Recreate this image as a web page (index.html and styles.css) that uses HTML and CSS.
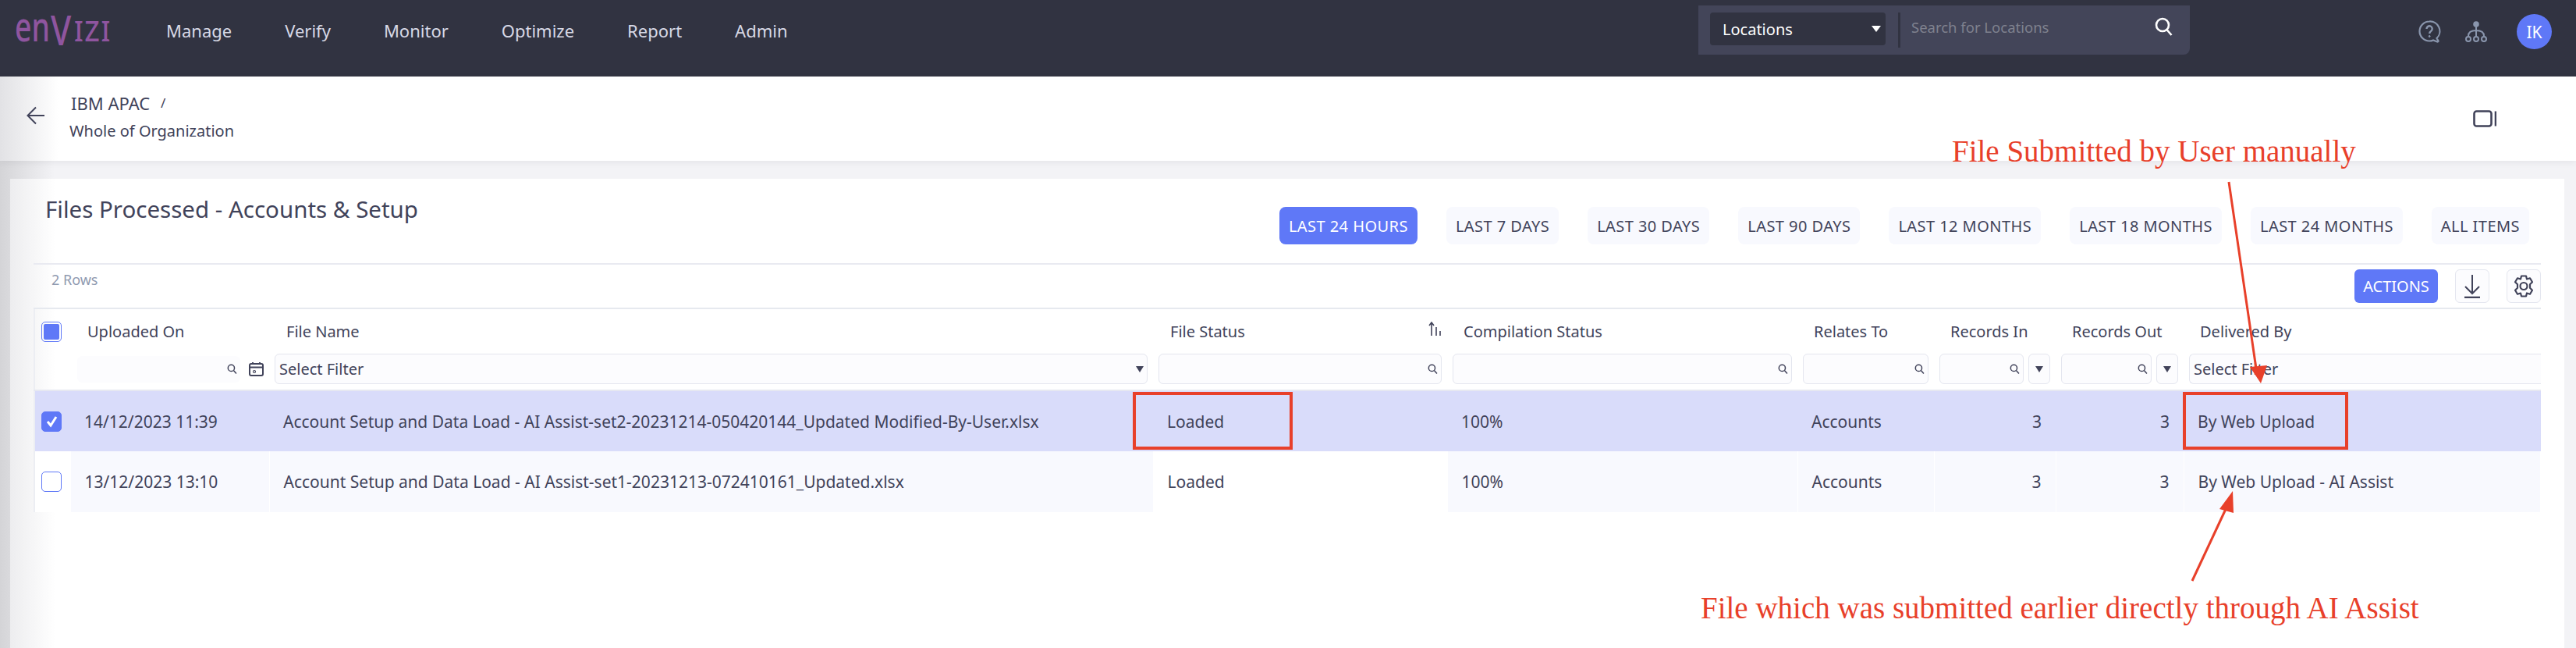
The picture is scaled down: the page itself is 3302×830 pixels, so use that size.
FILE: index.html
```html
<!DOCTYPE html>
<html lang="en">
<head>
    <meta charset="UTF-8">
    <title>Files Processed - Accounts &amp; Setup</title>
    <link rel="stylesheet" href="styles.css">
</head>
<body>
    <nav class="topbar">
        <div class="logo"><span class="logo-low">en</span><span class="logo-v">V</span><span class="logo-up">IZI</span></div>
        <ul class="menu">
            <li>Manage</li>
            <li>Verify</li>
            <li>Monitor</li>
            <li>Optimize</li>
            <li>Report</li>
            <li>Admin</li>
        </ul>
        <div class="search">
            <div class="search-select">
                <span>Locations</span>
                <span class="caret caret-white"></span>
            </div>
            <div class="search-input">
                <span>Search for Locations</span>
                <svg width="26" height="24" viewBox="0 0 26 24" fill="none" stroke="#fff" stroke-width="2.6">
                    <circle cx="11" cy="10" r="8"/>
                    <path d="M16.5 16l6 7"/>
                </svg>
            </div>
        </div>
        <div class="top-icons">
            <svg class="help" width="29" height="29" viewBox="0 0 29 29" fill="none" stroke="#8a96ad" stroke-width="2.2">
                <path d="M14 1.5a12.5 12.5 0 1 0 0 25c2 0 3.5-.4 5-1.1l5 2.1c1.5.3 2-.8 1-2l-1.5-2.5a12.5 12.5 0 0 0-9.500-21.500z"/>
                <path d="M10.5 11a3.6 3.6 0 1 1 5.5 3c-1.300.8-1.800 1.500-1.800 3" stroke-width="2.4"/>
                <circle cx="14.2" cy="20.5" r="1" fill="#8a96ad" stroke-width="1"/>
            </svg>
            <svg class="org" width="28" height="28" viewBox="0 0 28 28" fill="none" stroke="#8a96ad" stroke-width="2">
                <circle cx="14" cy="4" r="3.8" fill="#8a96ad" stroke="none"/>
                <path d="M14 7v15M4 19c0-5 4-7 10-7s10 2 10 7"/>
                <circle cx="4" cy="23" r="3" fill="#313341"/>
                <circle cx="14" cy="23" r="3" fill="#313341"/>
                <circle cx="24" cy="23" r="3" fill="#313341"/>
            </svg>
            <div class="avatar">IK</div>
        </div>
    </nav>

    <header class="subbar">
        <svg class="back" width="24" height="24" viewBox="0 0 24 24" fill="none" stroke="#41435a" stroke-width="2">
            <path d="M23 12H2M12 1.5L1.5 12 12 22.5"/>
        </svg>
        <div class="crumbs">
            <div class="crumb-top">IBM APAC <span class="crumb-sep">/</span></div>
            <div class="crumb-bottom">Whole of Organization</div>
        </div>
        <svg class="panel-icon" width="30" height="22" viewBox="0 0 30 22" fill="none" stroke="#41435a" stroke-width="2.6">
            <rect x="1.5" y="1.5" width="22" height="19" rx="3"/>
            <path d="M29 1.5v19"/>
        </svg>
    </header>

    <main class="page">
        <section class="card">
            <div class="card-head">
                <h1>Files Processed - Accounts &amp; Setup</h1>
                <div class="ranges">
                    <button class="range active">LAST 24 HOURS</button>
                    <button class="range">LAST 7 DAYS</button>
                    <button class="range">LAST 30 DAYS</button>
                    <button class="range">LAST 90 DAYS</button>
                    <button class="range">LAST 12 MONTHS</button>
                    <button class="range">LAST 18 MONTHS</button>
                    <button class="range">LAST 24 MONTHS</button>
                    <button class="range">ALL ITEMS</button>
                </div>
            </div>
            <div class="toolbar">
                <span class="row-count">2 Rows</span>
                <div class="tools">
                    <button class="actions">ACTIONS</button>
                    <button class="tool">
                        <svg width="22" height="30" viewBox="0 0 22 30" fill="none" stroke="#41435a" stroke-width="2">
                            <path d="M11 0v23M2 15l9 9 9-9"/>
                            <path d="M1 29h20" stroke-width="2.6"/>
                        </svg>
                    </button>
                    <button class="tool">
                        <svg width="28" height="29" viewBox="0 0 28 29" fill="none" stroke="#41435a" stroke-width="2.2">
                            <path d="M11 1.5h6l1 4 4-1.200 3 5-3 3v4.400l3 3-3 5-4-1.200-1 4h-6l-1-4-4 1.200-3-5 3-3v-4.400l-3-3 3-5 4 1.200z" stroke-linejoin="round"/>
                            <circle cx="14" cy="14.5" r="4.5"/>
                        </svg>
                    </button>
                </div>
            </div>

            <table class="grid">
                <colgroup>
                    <col class="c-check"><col class="c-date"><col class="c-name"><col class="c-status"><col class="c-comp">
                    <col class="c-rel"><col class="c-in"><col class="c-out"><col class="c-by">
                </colgroup>
                <thead>
                    <tr class="labels">
                        <th><span class="check check-some"></span></th>
                        <th>Uploaded On</th>
                        <th>File Name</th>
                        <th class="has-sort">File Status
                            <svg class="sort" width="18" height="18" viewBox="0 0 18 18" fill="none" stroke="#41435a" stroke-width="1.6">
                                <path d="M4 18V1M1 5l3-4 3 4"/>
                                <path d="M10 7v11M15 12v6"/>
                            </svg>
                        </th>
                        <th>Compilation Status</th>
                        <th>Relates To</th>
                        <th>Records In</th>
                        <th>Records Out</th>
                        <th>Delivered By</th>
                    </tr>
                    <tr class="filters">
                        <th></th>
                        <th>
                            <div class="filter-line">
                                <div class="filter plain"><svg class="mag" viewBox="0 0 12 12"><circle cx="5" cy="5" r="3.8"/><path d="M8 8l3 3.5"/></svg></div>
                                <svg class="cal" width="19" height="18" viewBox="0 0 19 18" fill="none" stroke="#41435a" stroke-width="2">
                                    <rect x="1" y="2" width="17" height="15" rx="2"/>
                                    <path d="M1 6.5h17M5 0v3M14 0v3"/>
                                    <circle cx="7" cy="12" r="1.5" stroke-width="1.2"/>
                                </svg>
                            </div>
                        </th>
                        <th>
                            <div class="filter"><span class="select-text">Select Filter</span><span class="caret"></span></div>
                        </th>
                        <th><div class="filter"><svg class="mag" viewBox="0 0 12 12"><circle cx="5" cy="5" r="3.8"/><path d="M8 8l3 3.5"/></svg></div></th>
                        <th><div class="filter"><svg class="mag" viewBox="0 0 12 12"><circle cx="5" cy="5" r="3.8"/><path d="M8 8l3 3.5"/></svg></div></th>
                        <th><div class="filter"><svg class="mag" viewBox="0 0 12 12"><circle cx="5" cy="5" r="3.8"/><path d="M8 8l3 3.5"/></svg></div></th>
                        <th>
                            <div class="filter-line tight">
                                <div class="filter"><svg class="mag" viewBox="0 0 12 12"><circle cx="5" cy="5" r="3.8"/><path d="M8 8l3 3.5"/></svg></div>
                                <div class="filter op"><span class="caret"></span></div>
                            </div>
                        </th>
                        <th>
                            <div class="filter-line tight">
                                <div class="filter"><svg class="mag" viewBox="0 0 12 12"><circle cx="5" cy="5" r="3.8"/><path d="M8 8l3 3.5"/></svg></div>
                                <div class="filter op"><span class="caret"></span></div>
                            </div>
                        </th>
                        <th><div class="filter open"><span class="select-text">Select Filter</span></div></th>
                    </tr>
                </thead>
                <tbody>
                    <tr class="selected">
                        <td><span class="check check-on">
                            <svg width="17" height="17" viewBox="0 0 17 17" fill="none" stroke="#fff" stroke-width="3"><path d="M3 9l4 5 7-11"/></svg>
                        </span></td>
                        <td>14/12/2023 11:39</td>
                        <td>Account Setup and Data Load - AI Assist-set2-20231214-050420144_Updated Modified-By-User.xlsx</td>
                        <td>Loaded</td>
                        <td>100%</td>
                        <td>Accounts</td>
                        <td class="num">3</td>
                        <td class="num">3</td>
                        <td>By Web Upload</td>
                    </tr>
                    <tr class="plain-row">
                        <td><span class="check"></span></td>
                        <td>13/12/2023 13:10</td>
                        <td>Account Setup and Data Load - AI Assist-set1-20231213-072410161_Updated.xlsx</td>
                        <td>Loaded</td>
                        <td>100%</td>
                        <td>Accounts</td>
                        <td class="num">3</td>
                        <td class="num">3</td>
                        <td>By Web Upload - AI Assist</td>
                    </tr>
                </tbody>
            </table>
        </section>
    </main>

    <!-- red markup drawn on top of the screenshot -->
    <svg class="markup" width="3302" height="830" viewBox="0 0 3302 830" fill="none" stroke="#e8402a">
        <rect x="1454" y="504" width="201" height="70" stroke-width="4"/>
        <rect x="2800" y="504" width="208" height="70" stroke-width="4"/>
        <path d="M2857 233L2892 472" stroke-width="3"/>
        <path d="M2898 491L2884 470L2906 468Z" fill="#e8402a" stroke="none"/>
        <path d="M2810 744L2854 650" stroke-width="3"/>
        <path d="M2862 629L2845 652L2863 657Z" fill="#e8402a" stroke="none"/>
    </svg>
    <div class="note note-user">File Submitted by User manually</div>
    <div class="note note-ai">File which was submitted earlier directly through AI Assist</div>
</body>
</html>
```

FILE: styles.css
```css
* {
    box-sizing: border-box;
}
html, body {
    height: 830px;
    overflow: hidden;
}
body {
    margin: 0;
    position: relative;
    font-family: "Noto Sans", sans-serif;
    font-size: 20px;
    color: #41435a;
    background-color: #f3f3f6;
}

/* top navigation */
.topbar {
    display: flex;
    align-items: flex-start;
    height: 98px;
    background-color: #313341;
}
.logo {
    display: flex;
    align-items: baseline;
    width: 140px;
    margin-left: 19px;
    padding-top: 8px;
    height: 60px;
    color: #8f559f;
    font-weight: 500;
    white-space: nowrap;
}
.logo span {
    display: inline-block;
    transform-origin: left bottom;
}
.logo-low {
    font-size: 52px;
    line-height: 50px;
    width: 46px;
    transform: scaleX(.72);
}
.logo-v {
    font-size: 52px;
    line-height: 50px;
    width: 30px;
    transform: translateY(5px) scaleX(.82);
}
.logo-up {
    font-size: 37px;
    line-height: 50px;
    letter-spacing: 2px;
    transform: scaleX(.9);
}
.menu {
    display: flex;
    gap: 68px;
    list-style: none;
    margin: 0 0 0 54px;
    padding: 25px 0 0;
    color: #d7d9e6;
    font-size: 22px;
    line-height: 28px;
}
.search {
    display: flex;
    margin: 7px 0 0 auto;
    width: 630px;
    height: 63px;
    padding: 9px 20px 0 15px;
    background-color: #434559;
    border-radius: 0 0 8px 0;
}
.search-select {
    display: flex;
    align-items: center;
    justify-content: space-between;
    width: 225px;
    height: 42px;
    padding: 0 6px 0 16px;
    background-color: #313341;
    border-radius: 4px;
    color: #fff;
}
.search-input {
    display: flex;
    justify-content: space-between;
    flex: 1;
    height: 45px;
    margin-left: 16px;
    padding: 6px 0 0 14px;
    border-left: 3px solid #313341;
    color: #7f818e;
    font-size: 18.5px;
}
.caret {
    display: inline-block;
    width: 0;
    height: 0;
    border-left: 6px solid transparent;
    border-right: 6px solid transparent;
    border-top: 8px solid #41435a;
}
.caret-white {
    border-top-color: #fff;
}
.top-icons {
    display: flex;
    align-items: center;
    height: 45px;
    margin: 18px 31px 0 0;
    padding-left: 293px;
    gap: 31px;
}
.avatar {
    display: flex;
    align-items: center;
    justify-content: center;
    width: 45px;
    height: 45px;
    margin-left: 7px;
    border-radius: 50%;
    background-color: #5f78f7;
    color: #fff;
    font-size: 21px;
}

/* breadcrumb bar */
.subbar {
    display: flex;
    align-items: center;
    height: 108px;
    padding: 0 102px 0 34px;
    background: linear-gradient(to right, #e2e2e5, #fff 75px);
    box-shadow: 0 2px 8px rgba(60, 60, 80, .08);
    position: relative;
}
.back {
    margin-bottom: 8px;
}
.crumbs {
    margin-left: 31px;
    padding-bottom: 4px;
    line-height: 28px;
    flex: 1;
}
.crumb-top {
    padding-left: 2px;
    margin-bottom: 8px;
    font-size: 22px;
}
.crumb-sep {
    margin-left: 8px;
    font-size: 17px;
    vertical-align: 3px;
}
.crumb-bottom {
    font-size: 20px;
}

/* card */
.page {
    height: 624px;
    padding: 23px 15px 0 13px;
    background: linear-gradient(to right, #d4d4d7, #f3f3f6 70px);
}
.card {
    height: 601px;
    padding: 0 30px;
    background: linear-gradient(to right, #ededef, #fff 58px);
}
.card-head {
    display: flex;
    justify-content: space-between;
    height: 110px;
    padding: 0 15px;
    border-bottom: 2px solid #e9eaf1;
}
.card-head h1 {
    margin: 20px 0 0;
    font-size: 29.5px;
    font-weight: 400;
    line-height: 38px;
}
.ranges {
    display: flex;
    gap: 37px;
    padding-top: 36px;
}
.range {
    height: 48px;
    padding: 0 12px;
    border: none;
    border-radius: 8px;
    background-color: #f8f9fe;
    font-family: inherit;
    font-size: 20px;
    letter-spacing: .45px;
    color: #41435a;
}
.range.active {
    background-color: #5f78f7;
    color: #fff;
}
.toolbar {
    display: flex;
    justify-content: space-between;
    height: 55px;
    padding: 6px 0 0 23px;
}
.row-count {
    font-size: 18px;
    line-height: 26px;
    color: #8f9ab0;
}
.tools {
    display: flex;
    gap: 22px;
}
.actions {
    width: 107px;
    height: 43px;
    border: none;
    border-radius: 6px;
    background-color: #5f78f7;
    color: #fff;
    font-family: inherit;
    font-size: 20px;
}
.tool {
    display: flex;
    align-items: center;
    justify-content: center;
    width: 44px;
    height: 43px;
    padding: 0;
    background-color: #fcfcfe;
    border: 1.5px solid #e4e6ef;
    border-radius: 6px;
}

/* table */
.grid {
    width: 3214px;
    table-layout: fixed;
    border-collapse: collapse;
    border-top: 2px solid #e6e9ef;
    border-left: 2px solid #eceef3;
}
.c-check { width: 46px; }
.c-date { width: 255px; }
.c-name { width: 1133px; }
.c-status { width: 377px; }
.c-comp { width: 449px; }
.c-rel { width: 175px; }
.c-in { width: 156px; }
.c-out { width: 164px; }
.grid th {
    padding: 0 0 0 22px;
    font-weight: 400;
    text-align: left;
}
.grid .labels th {
    height: 58px;
}
.grid .labels th:nth-child(n+5) {
    padding-left: 21px;
}
.grid .labels th:first-child {
    padding: 0 0 0 8px;
}
.has-sort {
    position: relative;
}
.sort {
    position: absolute;
    right: 6px;
    top: 16px;
}
.grid .filters th {
    height: 46px;
    padding: 0 7px 7px;
    border-bottom: 2px solid #e6e8f1;
}
.filter {
    display: flex;
    align-items: center;
    justify-content: flex-end;
    flex: 1;
    min-width: 0;
    height: 39px;
    padding: 0 4px;
    background-color: #fcfcfe;
    border: 1.5px solid #e4e6ef;
    border-radius: 6px;
}
.filter.plain {
    border: none;
    height: 34px;
    margin-left: 2px;
}
.filter.open {
    border-right: none;
    border-radius: 6px 0 0 6px;
    margin-right: -7px;
    justify-content: flex-start;
}
.filter-line {
    display: flex;
    align-items: flex-start;
    gap: 11px;
}
.filter-line.tight {
    gap: 6px;
}
.filter.op {
    flex: 0 0 28px;
    justify-content: center;
    padding: 0;
}
.filter .caret {
    border-left-width: 5px;
    border-right-width: 5px;
}
.select-text {
    flex: 1;
    padding-left: 1px;
}
.mag {
    width: 13px;
    height: 13px;
    fill: none;
    stroke: #41435a;
    stroke-width: 1.4;
}
.cal {
    margin-top: 8px;
}
.grid td {
    height: 78px;
    padding: 0 18px;
    font-size: 21px;
    background-color: #f8f9fe;
}
.grid td:first-child {
    padding: 0 0 0 8px;
}
.grid td.num {
    text-align: right;
}
.grid .selected td {
    background-color: #d9dcfa;
}
.grid .plain-row td:first-child,
.grid .plain-row td:nth-child(4) {
    background-color: #fff;
}
.plain-row td {
    border-right: 1px solid #fff;
}
.check {
    display: flex;
    align-items: center;
    justify-content: center;
    width: 26px;
    height: 26px;
    border: 1.5px solid #5f78f7;
    border-radius: 5px;
    background-color: #fff;
}
.check-some {
    padding: 2px;
    background-clip: content-box;
    background-color: #5f78f7;
}
.check-on {
    background-color: #5f78f7;
}

/* annotations */
.markup {
    position: absolute;
    left: 0;
    top: 0;
    pointer-events: none;
}
.note {
    position: absolute;
    font-family: "Liberation Serif", serif;
    font-size: 39px;
    line-height: 44px;
    color: #e8402a;
    white-space: nowrap;
}
.note-user {
    left: 2502px;
    top: 172px;
}
.note-ai {
    left: 2180px;
    top: 757px;
}
```
